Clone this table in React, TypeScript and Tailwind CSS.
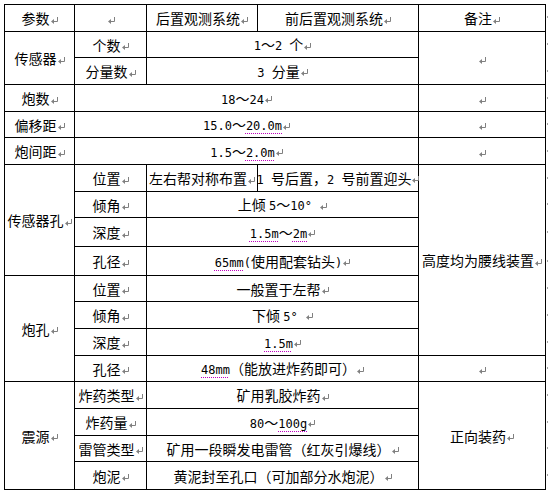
import React from "react";
import clsx from "clsx";

const P = () => (
  <svg
    width="7"
    height="7"
    viewBox="0 0 7 7"
    className="inline-block ml-[1px]"
    aria-hidden
  >
    <path d="M6.5 0 V4.5 H2" fill="none" stroke="#808080" strokeWidth="1" />
    <path d="M0 4.5 L3 2 L3 7 Z" fill="#808080" />
  </svg>
);

const M = ({ c, u }: { c: string; u?: boolean }) => (
  <span
    className={
      u
        ? "font-['DejaVu_Sans_Mono',monospace] text-[12px] underline decoration-dotted decoration-[#c000c0] decoration-1 underline-offset-[3px]"
        : "font-['DejaVu_Sans_Mono',monospace] text-[12px]"
    }
  >
    {c}
  </span>
);

const C = ({
  cls,
  children,
}: {
  cls: string;
  children?: React.ReactNode;
}) => (
  <div
    className={clsx(
      "flex items-center justify-center border-r border-b border-black",
      cls
    )}
  >
    <span className="whitespace-nowrap leading-none">
      {children}
      <P />
    </span>
  </div>
);

const tickRows = [
  "row-start-1",
  "row-start-2",
  "row-start-3",
  "row-start-4",
  "row-start-5",
  "row-start-6",
  "row-start-7",
  "row-start-8",
  "row-start-9",
  "row-start-10",
  "row-start-11",
  "row-start-12",
  "row-start-13",
  "row-start-14",
  "row-start-15",
  "row-start-16",
  "row-start-17",
  "row-start-18",
];

export default function App() {
  return (
    <div className="w-[548px] h-[492px] bg-white pt-[4px] pl-[4px] font-['Noto_Sans_CJK_SC',sans-serif] text-[14px] text-black">
      <div className="grid w-fit grid-cols-[71px_72px_111px_161px_127px_3px] grid-rows-[28px_26px_27px_27px_26px_27px_27px_26px_29px_29px_26px_27px_27px_26px_27px_27px_26px_28px]">
        {/* header */}
        <C cls="col-start-1 row-start-1 border-t border-l">参数</C>
        <C cls="col-start-2 row-start-1 border-t" />
        <C cls="col-start-3 row-start-1 border-t">后置观测系统</C>
        <C cls="col-start-4 row-start-1 border-t">前后置观测系统</C>
        <C cls="col-start-5 row-start-1 border-t">备注</C>

        {/* 传感器 */}
        <C cls="col-start-1 row-start-2 row-span-2 border-l">传感器</C>
        <C cls="col-start-2 row-start-2">个数</C>
        <C cls="col-start-3 col-span-2 row-start-2">
          <M c="1" />～<M c="2 " />个
        </C>
        <C cls="col-start-2 row-start-3">分量数</C>
        <C cls="col-start-3 col-span-2 row-start-3">
          <M c="3 " />分量
        </C>
        <C cls="col-start-5 row-start-2 row-span-2" />

        {/* 炮数 */}
        <C cls="col-start-1 row-start-4 border-l">炮数</C>
        <C cls="col-start-2 col-span-3 row-start-4">
          <M c="18" />～<M c="24" />
        </C>
        <C cls="col-start-5 row-start-4" />

        {/* 偏移距 */}
        <C cls="col-start-1 row-start-5 border-l">偏移距</C>
        <C cls="col-start-2 col-span-3 row-start-5">
          <M c="15.0" />～<M c="20.0m" u />
        </C>
        <C cls="col-start-5 row-start-5" />

        {/* 炮间距 */}
        <C cls="col-start-1 row-start-6 border-l">炮间距</C>
        <C cls="col-start-2 col-span-3 row-start-6">
          <M c="1.5" />～<M c="2.0m" u />
        </C>
        <C cls="col-start-5 row-start-6" />

        {/* 传感器孔 */}
        <C cls="col-start-1 row-start-7 row-span-4 border-l">传感器孔</C>
        <C cls="col-start-2 row-start-7">位置</C>
        <C cls="col-start-3 row-start-7">左右帮对称布置</C>
        <C cls="col-start-4 row-start-7">
          <M c="1 " />号后置，<M c="2 " />号前置迎头
        </C>
        <C cls="col-start-2 row-start-8">倾角</C>
        <C cls="col-start-3 col-span-2 row-start-8">
          上倾 <M c="5" />～<M c="10° " />
        </C>
        <C cls="col-start-2 row-start-9">深度</C>
        <C cls="col-start-3 col-span-2 row-start-9">
          <M c="1.5m" u />～<M c="2m" u />
        </C>
        <C cls="col-start-2 row-start-10">孔径</C>
        <C cls="col-start-3 col-span-2 row-start-10">
          <M c="65mm" u />
          <M c="(" />使用配套钻头<M c=")" />
        </C>
        <C cls="col-start-5 row-start-7 row-span-7">高度均为腰线装置</C>

        {/* 炮孔 */}
        <C cls="col-start-1 row-start-11 row-span-4 border-l">炮孔</C>
        <C cls="col-start-2 row-start-11">位置</C>
        <C cls="col-start-3 col-span-2 row-start-11">一般置于左帮</C>
        <C cls="col-start-2 row-start-12">倾角</C>
        <C cls="col-start-3 col-span-2 row-start-12">
          下倾 <M c="5° " />
        </C>
        <C cls="col-start-2 row-start-13">深度</C>
        <C cls="col-start-3 col-span-2 row-start-13">
          <M c="1.5m" u />
        </C>
        <C cls="col-start-2 row-start-14">孔径</C>
        <C cls="col-start-3 col-span-2 row-start-14">
          <M c="48mm" u />
          （能放进炸药即可）
        </C>
        <C cls="col-start-5 row-start-14" />

        {/* 震源 */}
        <C cls="col-start-1 row-start-15 row-span-4 border-l">震源</C>
        <C cls="col-start-2 row-start-15">炸药类型</C>
        <C cls="col-start-3 col-span-2 row-start-15">矿用乳胶炸药</C>
        <C cls="col-start-2 row-start-16">炸药量</C>
        <C cls="col-start-3 col-span-2 row-start-16">
          <M c="80" />～<M c="100g" u />
        </C>
        <C cls="col-start-2 row-start-17">雷管类型</C>
        <C cls="col-start-3 col-span-2 row-start-17">
          矿用一段瞬发电雷管（红灰引爆线）
        </C>
        <C cls="col-start-2 row-start-18">炮泥</C>
        <C cls="col-start-3 col-span-2 row-start-18">
          黄泥封至孔口（可加部分水炮泥）
        </C>
        <C cls="col-start-5 row-start-15 row-span-4">正向装药</C>

        {/* end-of-row marks */}
        {tickRows.map((r) => (
          <div key={r} className={clsx("col-start-6 flex items-center", r)}>
            <div className="ml-[1px] mt-[-2px] h-[2px] w-[1px] bg-[#a0a0a0]" />
          </div>
        ))}
      </div>
    </div>
  );
}
